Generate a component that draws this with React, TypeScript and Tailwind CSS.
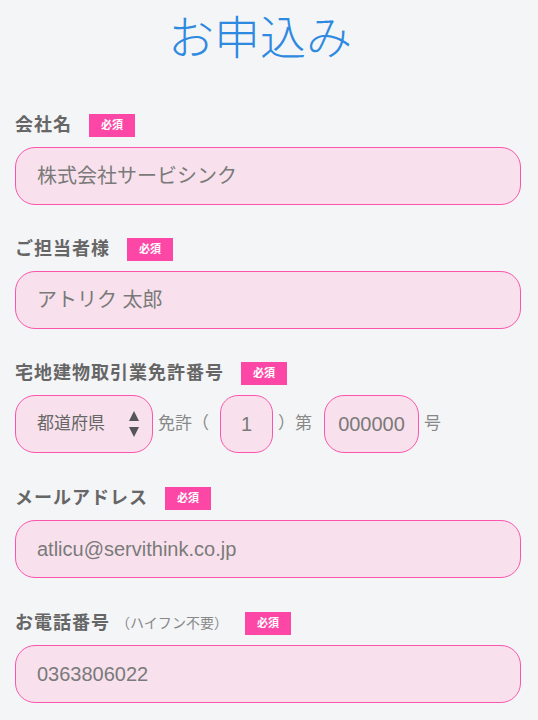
const jp = "font-['Liberation_Sans','Noto_Sans_CJK_JP',sans-serif]";

function Badge() {
  return (
    <span className="ml-[17px] inline-flex h-[23px] w-[46px] items-center justify-center bg-[#fd47a7] text-[11px] font-bold text-white">
      必須
    </span>
  );
}

function Label({ text, note }: { text: string; note?: string }) {
  return (
    <div className="flex h-[23px] items-center">
      <span className="text-[18px] font-bold tracking-[1px] text-[#666]">{text}</span>
      {note && <span className="ml-[6px] text-[14px] text-[#888]">{note}</span>}
      <Badge />
    </div>
  );
}

function Field({ placeholder }: { placeholder: string }) {
  return (
    <div className="mt-[10px] flex h-[58px] w-full items-center rounded-[20px] border border-[#fb55ae] bg-[#f8e1ec] pl-[21px] text-[20px] text-[#7a7a7a]">
      {placeholder}
    </div>
  );
}

export default function App() {
  return (
    <div className={`${jp} min-h-[720px] bg-[#f4f5f7] pl-[15px] pr-[17px] pt-[10px]`}>
      <h1 className="pr-[16px] text-center text-[46px] font-light leading-[56px] text-[#2e89e0]">
        お申込み
      </h1>

      <div className="mt-[48px]">
        <Label text="会社名" />
        <Field placeholder="株式会社サービシンク" />
      </div>

      <div className="mt-[33px]">
        <Label text="ご担当者様" />
        <Field placeholder="アトリク 太郎" />
      </div>

      <div className="mt-[33px]">
        <Label text="宅地建物取引業免許番号" />
        <div className="mt-[10px] flex items-center text-[17px] text-[#888]">
          <div className="flex h-[58px] w-[138px] items-center justify-between rounded-[20px] border border-[#fb55ae] bg-[#f8e1ec] pl-[21px] pr-[13px] text-[#666]">
            <span className="text-[17px]">都道府県</span>
            <svg width="10" height="26" viewBox="0 0 10 26" className="fill-[#555]">
              <path d="M5 0 L10 10 L0 10 Z" />
              <path d="M0 16 L10 16 L5 26 Z" />
            </svg>
          </div>
          <span className="ml-[5px]">免許（</span>
          <div className="ml-[11px] flex h-[58px] w-[53px] items-center justify-center rounded-[18px] border border-[#fb55ae] bg-[#f8e1ec] text-[20px] text-[#7a7a7a]">
            1
          </div>
          <span className="ml-[5px]">）第</span>
          <div className="ml-[12px] flex h-[58px] w-[95px] items-center justify-center rounded-[20px] border border-[#fb55ae] bg-[#f8e1ec] text-[20px] text-[#7a7a7a]">
            000000
          </div>
          <span className="ml-[5px]">号</span>
        </div>
      </div>

      <div className="mt-[34px]">
        <Label text="メールアドレス" />
        <Field placeholder="atlicu@servithink.co.jp" />
      </div>

      <div className="mt-[34px]">
        <Label text="お電話番号" note="（ハイフン不要）" />
        <Field placeholder="0363806022" />
      </div>
    </div>
  );
}
